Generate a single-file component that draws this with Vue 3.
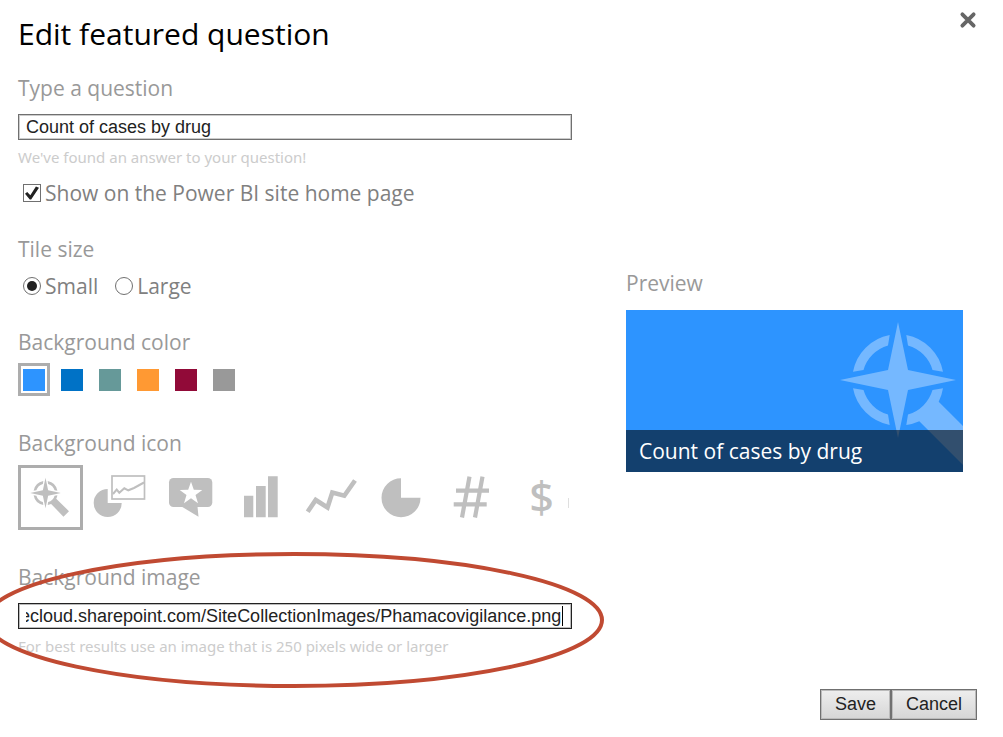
<script setup>
import { ref, onMounted } from 'vue'

const question = ref('Count of cases by drug')
const imageUrl = ref('ecloud.sharepoint.com/SiteCollectionImages/Phamacovigilance.png')
const showOnHome = ref(true)
const tileSize = ref('small')
const urlField = ref(null)

const colors = [
  { name: 'Blue', value: '#2d94ff' },
  { name: 'Dark blue', value: '#0072c6' },
  { name: 'Teal', value: '#669999' },
  { name: 'Orange', value: '#ff9933' },
  { name: 'Crimson', value: '#910a38' },
  { name: 'Gray', value: '#999999' },
]
const color = ref('#2d94ff')

const icons = ['compass', 'report', 'favorite', 'bars', 'line', 'pie', 'number', 'currency', 'more']
const icon = ref('compass')

onMounted(() => {
  urlField.value.scrollLeft = urlField.value.scrollWidth
})
</script>

<template>
  <main class="dialog">
    <header class="head">
      <h1>Edit featured question</h1>
      <button class="close" type="button" aria-label="Close">
        <svg viewBox="0 0 16 16"><path d="M3 3L13 13M13 3L3 13" /></svg>
      </button>
    </header>

    <form class="body" @submit.prevent>
      <div class="fields">
        <section class="group">
          <label class="title" for="question">Type a question</label>
          <input id="question" v-model="question" class="text" type="text" />
          <p class="hint">We've found an answer to your question!</p>
          <label class="option">
            <input v-model="showOnHome" type="checkbox" />Show on the Power BI site home page
          </label>
        </section>

        <fieldset class="group">
          <legend class="title">Tile size</legend>
          <div class="radios">
            <label class="option"><input v-model="tileSize" type="radio" name="size" value="small" />Small</label>
            <label class="option"><input v-model="tileSize" type="radio" name="size" value="large" />Large</label>
          </div>
        </fieldset>

        <section class="group">
          <h2 class="title">Background color</h2>
          <div class="swatches">
            <button
              v-for="c in colors"
              :key="c.value"
              type="button"
              class="swatch"
              :class="{ selected: c.value === color }"
              :aria-label="c.name"
              @click="color = c.value"
            >
              <span :style="{ background: c.value }"></span>
            </button>
          </div>
        </section>

        <section class="group">
          <h2 class="title">Background icon</h2>
          <div class="icons">
            <button
              v-for="i in icons"
              :key="i"
              type="button"
              class="icon"
              :class="{ selected: i === icon }"
              :aria-label="i"
              @click="icon = i"
            >
              <svg viewBox="0 0 65 65">
                <g v-if="i === 'compass'" transform="translate(27.5 28) scale(.264)">
                  <path d="M0-58L10-10L58 0L10 10L0 58L-10 10L-58 0L-10-10Z" />
                  <path d="M-45-8.300A46 46 0 0 1-8.300-45L-10-34.500A36 36 0 0 0-34.500-10ZM8.300-45A46 46 0 0 1 45-8.300L34.500-10A36 36 0 0 0 10-34.500ZM-8.300 45A46 46 0 0 1-45 8.300L-34.500 10A36 36 0 0 0-10 34.500ZM45 8.300A46 46 0 0 1 40.700 21.700L89 69L68 90L21.300 41.300A46 46 0 0 1 8.300 45L10 34.500A36 36 0 0 0 34.500 10Z" />
                </g>
                <g v-else-if="i === 'report'">
                  <path d="M19.700 38V24A14 14 0 1 0 33.700 38Z" />
                  <rect class="line" x="24" y="11" width="32.500" height="23" stroke-width="1.700" />
                  <path class="line" stroke-width="2" d="M25 29L28.700 24.500L31.300 27.700L36.300 23.300L40.300 25.300L46 23L56 17.500" />
                </g>
                <g v-else-if="i === 'favorite'">
                  <rect x="11" y="13" width="43.300" height="29" rx="4.500" />
                  <path d="M23.500 41.500L40.500 51.700L39.500 41.500Z" />
                  <path class="cut" d="M33 16.700L35.800 24.800L44.300 24.900L37.500 30L40 38.200L33 33.300L26 38.200L28.500 30L21.700 24.900L30.200 24.800Z" />
                </g>
                <path v-else-if="i === 'bars'" d="M16 30.700H25.300V52.300H16ZM28 21H37.700V52.300H28ZM40 11.300H49.700V52.300H40Z" />
                <path v-else-if="i === 'line'" class="line" stroke-width="4.600" d="M9.700 46.700L17.700 35L29.500 42.500L34.300 27.500L46.300 30.700L57 15.500" />
                <path v-else-if="i === 'pie'" d="M33 32.700V13.200A19.500 19.500 0 1 0 52.500 32.700Z" />
                <path v-else-if="i === 'number'" class="line" stroke-width="4.200" d="M31.500 11.700L24 52.500M44.500 11.700L37 52.500M18 25.700H51M15.700 39.300H48.700" />
                <text v-else-if="i === 'currency'" x="33.500" y="48" font-size="43">$</text>
                <rect v-else x="-9.500" y="33" width="20" height="10" />
              </svg>
            </button>
          </div>
        </section>

        <section class="group image">
          <label class="title" for="image">Background image</label>
          <div class="field">
            <input id="image" ref="urlField" v-model="imageUrl" class="text active" type="text" />
            <span class="caret"></span>
          </div>
          <p class="hint">For best results use an image that is 250 pixels wide or larger</p>
          <svg class="ring" viewBox="0 0 620 138"><ellipse cx="310" cy="69" rx="308" ry="66" /></svg>
        </section>
      </div>

      <aside class="preview">
        <h2 class="title">Preview</h2>
        <div class="tile" :style="{ background: color }">
          <svg class="art" viewBox="-60 -60 125 152">
            <path d="M0-58L10-10L58 0L10 10L0 58L-10 10L-58 0L-10-10Z" />
            <path d="M-45-8.300A46 46 0 0 1-8.300-45L-10-34.500A36 36 0 0 0-34.500-10ZM8.300-45A46 46 0 0 1 45-8.300L34.500-10A36 36 0 0 0 10-34.500ZM-8.300 45A46 46 0 0 1-45 8.300L-34.500 10A36 36 0 0 0-10 34.500ZM45 8.300A46 46 0 0 1 40.700 21.700L89 70L68 88L21.300 41.300A46 46 0 0 1 8.300 45L10 34.500A36 36 0 0 0 34.500 10Z" />
          </svg>
          <p class="caption">{{ question }}</p>
        </div>
      </aside>
    </form>

    <footer class="actions">
      <button type="button">Save</button>
      <button type="button">Cancel</button>
    </footer>
  </main>
</template>

<style>
body {
  background: #fff;
}
</style>

<style scoped>
.dialog {
  box-sizing: border-box;
  padding: 10px 26px 17px 18px;
  overflow: hidden;
  font-family: "Open Sans", "Noto Sans", sans-serif;
  font-size: 21px;
  line-height: 28px;
  color: #808080;
}
h1,
h2,
p,
fieldset,
legend {
  margin: 0;
  padding: 0;
  border: 0;
  font-weight: 400;
}
.head {
  display: flex;
  justify-content: space-between;
  align-items: flex-start;
}
h1 {
  font-size: 30px;
  line-height: 48px;
  color: #000;
}
.close {
  width: 18px;
  height: 20px;
  padding: 0;
  border: 0;
  background: none;
}
.close svg {
  display: block;
  width: 18px;
  height: 20px;
  fill: none;
  stroke: #666;
  stroke-width: 3.4;
  stroke-linecap: round;
}
.body {
  display: grid;
  grid-template-columns: minmax(0, 554fr) minmax(0, 337fr);
  gap: 54px;
  margin: 16px 14px 0 0;
}
.fields {
  display: flex;
  flex-direction: column;
  gap: 28px;
}
.group {
  min-width: 0;
}
.title {
  display: block;
  font-size: 21px;
  line-height: 28px;
  color: #999;
}
.text {
  display: block;
  box-sizing: border-box;
  width: 100%;
  height: 26px;
  margin-top: 12px;
  padding: 0 7px;
  border: 1px solid #707070;
  outline: 0;
  box-shadow: inset 0 0 0 1px #ccc;
  font-family: "Liberation Sans", Arial, sans-serif;
  font-size: 18px;
  color: #222;
}
.text.active {
  padding-right: 10px;
  border-color: #222;
  box-shadow: inset 0 0 0 1px #bbb;
}
.field {
  position: relative;
}
.caret {
  position: absolute;
  right: 9px;
  top: 3px;
  width: 1px;
  height: 20px;
  background: #000;
}
.hint {
  margin-top: 7px;
  font-family: "Noto Sans", "Open Sans", sans-serif;
  font-size: 15px;
  line-height: 20px;
  color: #ccc;
}
.option {
  display: flex;
  align-items: center;
  gap: 4px;
}
.hint + .option {
  margin-top: 12px;
}
.option input {
  appearance: none;
  display: grid;
  place-items: center;
  box-sizing: border-box;
  width: 18px;
  height: 18px;
  margin: 0 0 0 5px;
  border: 1px solid #707070;
  background: #fff;
}
.option input[type="radio"] {
  border-radius: 50%;
}
.option input:checked::before {
  content: "";
  width: 14px;
  height: 14px;
  background: #222;
  clip-path: polygon(0 55%, 16% 42%, 38% 66%, 78% 4%, 100% 12%, 44% 96%, 34% 96%);
}
.option input[type="radio"]:checked::before {
  width: 10px;
  height: 10px;
  border-radius: 50%;
  clip-path: none;
}
.radios {
  display: flex;
  gap: 12px;
  margin-top: 9px;
}
.swatches {
  display: flex;
  gap: 6px;
  margin-top: 7px;
}
.swatch {
  box-sizing: border-box;
  width: 32px;
  height: 33px;
  padding: 2px;
  border: 3px solid transparent;
  background: none;
}
.swatch.selected {
  border-color: #adadad;
}
.swatch span {
  display: block;
  height: 22px;
}
.swatches,
.icons {
  margin-bottom: 5px;
}
.icons {
  display: flex;
  gap: 5px;
  margin-top: 8px;
  margin-right: 3px;
  overflow: hidden;
}
.icon {
  flex: none;
  width: 65px;
  height: 65px;
  padding: 0;
  border: 0;
  background: none;
}
.icon.selected {
  box-shadow: inset 0 0 0 3px #adadad;
}
.icon svg {
  display: block;
  width: 65px;
  height: 65px;
  overflow: visible;
  fill: #bfbfbf;
}
.icon .line {
  fill: none;
  stroke: #bfbfbf;
}
.icon .cut {
  fill: #fff;
}
.icon text {
  font-family: "Noto Sans", sans-serif;
  font-weight: 500;
  text-anchor: middle;
}
.image {
  position: relative;
}
.ring {
  position: absolute;
  left: -34px;
  top: -12px;
  width: 620px;
  height: 138px;
  fill: none;
  stroke: #c04a32;
  stroke-width: 4;
  pointer-events: none;
}
.preview {
  margin-top: 195px;
}
.tile {
  position: relative;
  display: flex;
  flex-direction: column;
  justify-content: flex-end;
  height: 162px;
  margin-top: 13px;
  overflow: hidden;
}
.art {
  position: absolute;
  right: 0;
  top: 10px;
  width: 125px;
  height: 152px;
  fill: #75b8ff;
}
.caption {
  position: relative;
  padding: 0 13px;
  line-height: 42px;
  color: #fff;
  background: rgba(0, 0, 0, 0.57);
}
.actions {
  display: flex;
  justify-content: flex-end;
  margin-top: 33px;
}
.actions button {
  height: 31px;
  padding: 0 14px;
  border: 1px solid #707070;
  box-shadow: inset 0 0 0 1px #bbb;
  background: linear-gradient(#eee, #d6d6d6);
  font-family: "Liberation Sans", Arial, sans-serif;
  font-size: 18px;
  color: #222;
}
</style>
